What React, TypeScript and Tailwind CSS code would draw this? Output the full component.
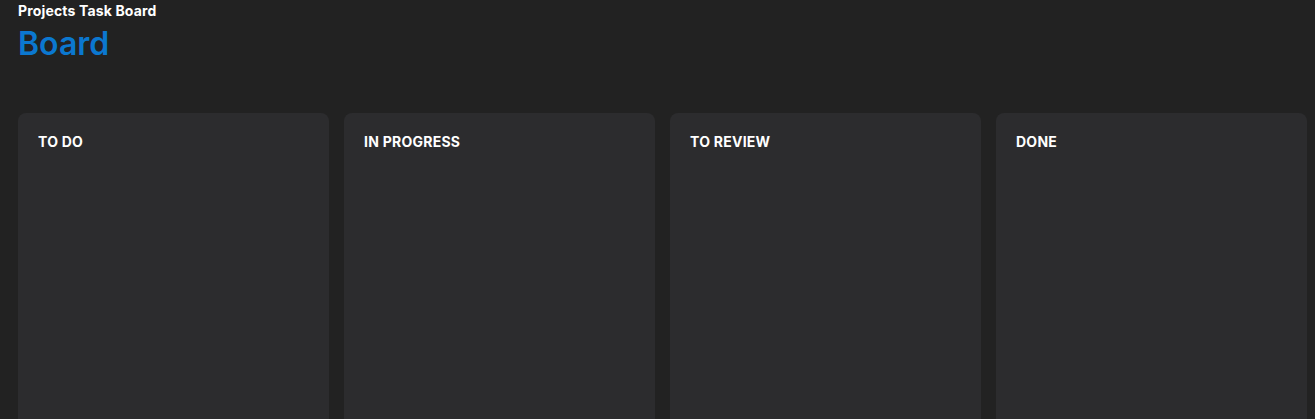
const columns = ["TO DO", "IN PROGRESS", "TO REVIEW", "DONE"];

export default function App() {
  return (
    <div className="h-[419px] overflow-hidden bg-[#222222] pl-[18px] text-white font-['Inter',sans-serif]">
      {/* Header */}
      <header>
        <p className="pt-[2px] text-[14px] font-bold leading-[17px] tracking-[0.15px]">Projects Task Board</p>
        <h1 className="mt-[6px] text-[32px] font-semibold leading-[38px] text-[#0b78d0]">Board</h1>
      </header>

      {/* Columns */}
      <div className="mt-[50px] flex gap-[15px]">
        {columns.map((title) => (
          <section key={title} className="h-[320px] w-[311px] rounded-lg bg-[#2c2c2e] px-5 pt-5">
            <h2 className="text-[14px] font-bold leading-[17px] tracking-[0.25px]">{title}</h2>
          </section>
        ))}
      </div>
    </div>
  );
}
